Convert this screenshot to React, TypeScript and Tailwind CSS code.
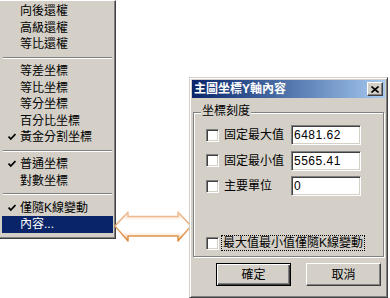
import React from "react";

const menuGroups: { label: string; checked?: boolean; active?: boolean }[][] = [
  [{ label: "向後還權" }, { label: "高級還權" }, { label: "等比還權" }],
  [
    { label: "等差坐標" },
    { label: "等比坐標" },
    { label: "等分坐標" },
    { label: "百分比坐標" },
    { label: "黃金分割坐標", checked: true },
  ],
  [{ label: "普通坐標", checked: true }, { label: "對數坐標" }],
  [{ label: "僅隨K線變動", checked: true }, { label: "內容...", active: true }],
];

function Check({ white }: { white?: boolean }) {
  return (
    <svg width="8" height="8" viewBox="0 0 8 8">
      <path
        d="M0.5 3.5 L2.8 6 L7.5 1"
        fill="none"
        stroke={white ? "#fff" : "#000"}
        strokeWidth="1.8"
      />
    </svg>
  );
}

function MenuItem({ label, checked, active }: { label: string; checked?: boolean; active?: boolean }) {
  return (
    <div
      className={
        "flex h-[16.5px] items-center " +
        (active ? "bg-[#0a246a] text-white" : "text-black")
      }
    >
      <div className="flex w-[18px] justify-center pl-[2px]">{checked && <Check white={active} />}</div>
      <span className="leading-none">{label}</span>
    </div>
  );
}

function Separator() {
  return (
    <div className="flex h-[10.5px] items-center px-[1px]">
      <div className="h-[2px] w-full border-t border-b border-t-[#808080] border-b-white" />
    </div>
  );
}

function Checkbox() {
  return (
    <div className="h-[13px] w-[13px] shrink-0 border border-t-[#808080] border-l-[#808080] border-r-white border-b-white bg-white shadow-[inset_1px_1px_#404040,inset_-1px_-1px_#d4d0c8]" />
  );
}

function Field({ label, value }: { label: string; value: string }) {
  return (
    <div className="flex h-[20px] items-center">
      <Checkbox />
      <span className="ml-[5px] w-[67px] leading-none">{label}</span>
      <div className="flex h-[20px] w-[70px] items-center border border-t-[#808080] border-l-[#808080] border-r-white border-b-white bg-white pl-[2px] shadow-[inset_1px_1px_#404040,inset_-1px_-1px_#d4d0c8]">
        <span className="leading-none tracking-[0.5px]">{value}</span>
      </div>
    </div>
  );
}

export default function App() {
  return (
    <div className="relative h-[298px] w-[390px] overflow-hidden bg-white text-[12px] [font-family:'Liberation_Sans','Noto_Sans_CJK_TC',sans-serif]">
      {/* context menu */}
      <div className="absolute left-0 top-0 flex h-[239px] w-[116px] flex-col border-t border-r border-b border-t-white border-r-[#404040] border-b-[#404040] bg-[#d4d0c8] pt-[2px] pl-[2px] pr-[2px] shadow-[inset_-1px_-1px_#808080]">
        {menuGroups.map((group, gi) => (
          <React.Fragment key={gi}>
            {gi > 0 && <Separator />}
            {group.map(item => (
              <MenuItem key={item.label} {...item} />
            ))}
          </React.Fragment>
        ))}
      </div>

      {/* double arrow */}
      <svg className="absolute left-[113px] top-[209px]" width="80" height="36" viewBox="0 0 80 36">
        <defs>
          <linearGradient id="arrowFill" x1="0" y1="0" x2="0" y2="1">
            <stop offset="0" stopColor="#f7d2b4" />
            <stop offset="0.3" stopColor="#ffffff" />
            <stop offset="0.7" stopColor="#ffffff" />
            <stop offset="1" stopColor="#f3bf8c" />
          </linearGradient>
          <linearGradient id="arrowStroke" x1="0" y1="0" x2="0" y2="1">
            <stop offset="0" stopColor="#f0c09a" />
            <stop offset="1" stopColor="#dc8c3c" />
          </linearGradient>
        </defs>
        <polygon
          points="2,17 15,3 15,7.5 65,7.5 65,3 78,17 65,32 65,27 15,27 15,32"
          fill="url(#arrowFill)"
          stroke="url(#arrowStroke)"
          strokeWidth="1.5"
          strokeLinejoin="round"
        />
      </svg>

      {/* dialog */}
      <div className="absolute left-[189px] top-[77px] flex h-[221px] w-[199px] flex-col border border-t-[#d4d0c8] border-l-[#d4d0c8] border-r-[#404040] border-b-[#404040] bg-[#d4d0c8] p-[2px] shadow-[inset_1px_1px_#fff,inset_-1px_-1px_#808080]">
        <div className="flex h-[18px] items-center justify-between bg-gradient-to-r from-[#0a246a] to-[#a6caf0] pl-[2px] pr-[2px]">
          <span className="font-bold leading-none text-white">主圖坐標Y軸內容</span>
          <div className="flex h-[14px] w-[16px] items-center justify-center border border-t-white border-l-white border-r-[#404040] border-b-[#404040] bg-[#d4d0c8] shadow-[inset_-1px_-1px_#808080]">
            <svg width="8" height="7" viewBox="0 0 8 7">
              <path d="M0.5 0.5 L7.5 6.5 M7.5 0.5 L0.5 6.5" stroke="#000" strokeWidth="1.6" />
            </svg>
          </div>
        </div>

        <div className="relative ml-[1px] mr-[1px] mt-[14px] flex h-[145px] flex-col border border-[#808080] pl-[12px] pt-[12px] pb-[5px] shadow-[1px_1px_#fff,inset_1px_1px_#fff]">
          <span className="absolute -top-[8px] left-[7px] bg-[#d4d0c8] px-[1px] leading-none">坐標刻度</span>
          <div className="flex flex-col gap-[5.5px]">
            <Field label="固定最大值" value="6481.62" />
            <Field label="固定最小值" value="5565.41" />
            <Field label="主要單位" value="0" />
          </div>
          <div className="mt-auto flex items-center">
            <Checkbox />
            <span className="ml-[2px] border border-dotted border-black px-[1px] py-[1px] leading-none">
              最大值最小值僅隨K線變動
            </span>
          </div>
        </div>

        <div className="mt-[6px] flex justify-end gap-[15px] pr-[4px]">
          <button className="flex h-[23px] w-[75px] items-center justify-center border border-black bg-[#d4d0c8] shadow-[inset_1px_1px_#fff,inset_-1px_-1px_#404040,inset_-2px_-2px_#808080]">
            <span className="leading-none">確定</span>
          </button>
          <button className="flex h-[23px] w-[75px] items-center justify-center border border-t-white border-l-white border-r-[#404040] border-b-[#404040] bg-[#d4d0c8] shadow-[inset_-1px_-1px_#808080]">
            <span className="leading-none">取消</span>
          </button>
        </div>
      </div>
    </div>
  );
}
